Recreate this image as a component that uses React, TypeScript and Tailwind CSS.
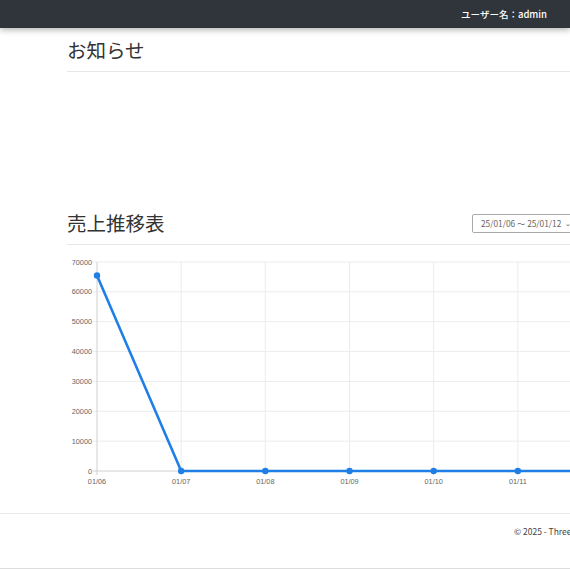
import React from "react";

const font = { fontFamily: '"Noto Sans CJK JP", "Noto Sans", sans-serif' };

function Chart() {
  const x0 = 97;
  const dx = 84.17;
  const y0 = 471;
  const dy = 29.857;
  const labels = ["01/06", "01/07", "01/08", "01/09", "01/10", "01/11", "01/12"];
  const data = [65500, 0, 0, 0, 0, 0, 0];
  const pts = data.map((v, i) => [x0 + i * dx, y0 - (v / 10000) * dy]);
  return (
    <svg width="515" height="250" viewBox="67 245 515 250" className="block">
      {Array.from({ length: 8 }).map((_, i) => (
        <g key={"h" + i}>
          <line x1={93} x2={600} y1={y0 - i * dy} y2={y0 - i * dy} stroke={i === 0 ? "#d0d0d0" : "#ececec"} strokeWidth="1" />
          <text x={92} y={y0 - i * dy + 2.6} textAnchor="end" fontSize="7.3" fill="#666666" fontFamily='"Liberation Sans", Arial, sans-serif'>
            {i * 10000}
          </text>
        </g>
      ))}
      {labels.map((l, i) => (
        <g key={"v" + i}>
          <line x1={x0 + i * dx} x2={x0 + i * dx} y1={262} y2={475} stroke={i === 0 ? "#d0d0d0" : "#ececec"} strokeWidth="1" />
          <text x={x0 + i * dx} y={484} textAnchor="middle" fontSize="7.3" fill="#666666" fontFamily='"Liberation Sans", Arial, sans-serif'>
            {l}
          </text>
        </g>
      ))}
      <polyline points={pts.map((p) => p.join(",")).join(" ")} fill="none" stroke="#1f7fe6" strokeWidth="2.6" />
      {pts.map((p, i) => (
        <circle key={i} cx={p[0]} cy={p[1]} r="3.2" fill="#1f7fe6" />
      ))}
    </svg>
  );
}

export default function App() {
  return (
    <div className="w-[570px] h-[570px] overflow-hidden bg-white relative" style={font}>
      <div className="h-[28px] bg-[#30343b] flex items-center justify-end pr-[23px] shadow-[0_2px_6px_rgba(0,0,0,0.3)] relative z-10">
        <span className="text-white text-[9.5px] font-medium whitespace-nowrap">ユーザー名：admin</span>
      </div>
      <div className="pl-[67px]">
        <div className="w-[520px]">
          <h4 className="mt-[10px] text-[19.5px] leading-[24px] text-[#333]">お知らせ</h4>
          <div className="mt-[9px] border-t border-[#e6e6e6]" />
          <div className="mt-[139px] flex items-center justify-between h-[24px]">
            <h4 className="text-[19.5px] leading-[24px] text-[#333]">売上推移表</h4>
            <div className="w-[115px] h-[19px] border border-[#aaa] rounded-[2px] flex items-center pl-[8px] text-[8.3px] text-[#666] whitespace-nowrap">
              25/01/06 ～ 25/01/12
              <span className="ml-[4px] text-[7px] text-[#555]">⌄</span>
            </div>
          </div>
          <div className="mt-[9px] border-t border-[#e6e6e6]" />
          <Chart />
        </div>
      </div>
      <div className="mt-[18px] border-t border-[#e9e9e9]" />
      <div className="h-[34px] flex items-center pl-[514px] text-[8.5px] text-[#444] whitespace-nowrap">© 2025 - ThreeLine</div>
      <div className="mt-[20px] border-t border-[#ddd]" />
    </div>
  );
}
